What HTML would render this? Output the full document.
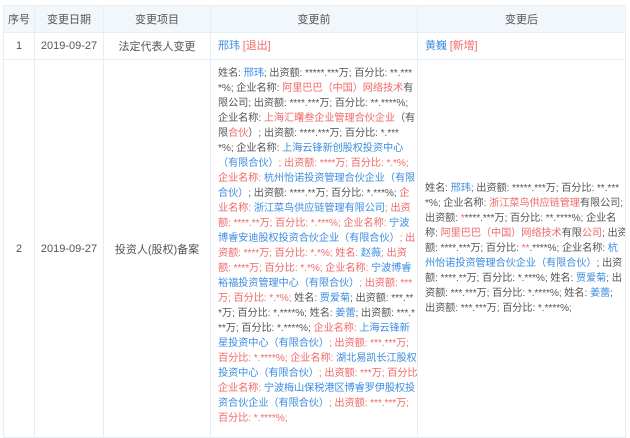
<!DOCTYPE html>
<html><head><meta charset="utf-8"><style>
body{margin:0;background:#fff;font-family:"Liberation Sans","Noto Sans CJK SC",sans-serif;font-size:11px;color:#555;}
table{position:absolute;left:3px;top:5px;border-collapse:collapse;table-layout:fixed;width:622px;}
td,th{border:1px solid #e6edf5;padding:0;overflow:hidden;}
th{background:#f2f7fc;height:26px;font-weight:normal;color:#555;font-size:11px;}
td.c{text-align:center;}
.r1 td{height:26px;}
.t{padding:0 0 0 7px;white-space:nowrap;line-height:15px;font-size:10.2px;letter-spacing:-0.1px;}
.b{color:#3d8de0}.r{color:#f06a6a}
</style></head><body>
<table>
<colgroup><col style="width:31px"><col style="width:69px"><col style="width:107px"><col style="width:207px"><col style="width:208px"></colgroup>
<tr><th>序号</th><th>变更日期</th><th>变更项目</th><th>变更前</th><th>变更后</th></tr>
<tr class="r1"><td class="c">1</td><td class="c">2019-09-27</td><td class="c">法定代表人变更</td><td class="t" style="font-size:11px"><span class="b">邢玮</span> <span class="r">[退出]</span></td><td class="t" style="font-size:11px"><span class="b">黄巍</span> <span class="r">[新增]</span></td></tr>
<tr><td class="c">2</td><td class="c">2019-09-27</td><td class="c">投资人(股权)备案</td>
<td class="t" style="height:371px;vertical-align:top;padding-top:6px">姓名: <span class="b">邢玮</span>; 出资额: *****.***万; 百分比: **.***<br>
*%; 企业名称: <span class="r">阿里巴巴（中国）网络技术</span>有<br>
限公司; 出资额: ****.***万; 百分比: **.****%;<br>
企业名称: <span class="r">上海汇曙叁企业管理合伙企业</span>（有<br>
限<span class="r">合伙</span>）; 出资额: ****.***万; 百分比: *.***<br>
*%; 企业名称: <span class="b">上海云锋新创股权投资中心</span><br>
<span class="b">（有限合伙）</span><span class="r">; 出资额: ****万; 百分比: *.*%;</span><br>
<span class="r">企业名称: </span><span class="b">杭州怡诺投资管理合伙企业（有限</span><br>
<span class="b">合伙）</span>; 出资额: ****.**万; 百分比: *.***%; <span class="r">企</span><br>
<span class="r">业名称: </span><span class="b">浙江菜鸟供应链管理有限公司</span><span class="r">; 出资</span><br>
<span class="r">额: ****.**万; 百分比: *.***%; 企业名称: </span><span class="b">宁波</span><br>
<span class="b">博睿安迪股权投资合伙企业（有限合伙）</span><span class="r">; 出</span><br>
<span class="r">资额: ****万; 百分比: *.*%; 姓名: </span><span class="b">赵薇</span><span class="r">; 出资</span><br>
<span class="r">额: ****万; 百分比: *.*%; 企业名称: </span><span class="b">宁波博睿</span><br>
<span class="b">裕福投资管理中心（有限合伙）</span><span class="r">; 出资额: ***</span><br>
<span class="r">万; 百分比: *.*%;</span> 姓名: <span class="b">贾爱菊</span>; 出资额: ***.**<br>
*万; 百分比: *.****%; 姓名: <span class="b">姜蕾</span>; 出资额: ***.*<br>
**万; 百分比: *.****%; <span class="r">企业名称: </span><span class="b">上海云锋新</span><br>
<span class="b">星投资中心（有限合伙）</span><span class="r">; 出资额: ***.***万;</span><br>
<span class="r">百分比: *.****%; 企业名称: </span><span class="b">湖北易凯长江股权</span><br>
<span class="b">投资中心（有限合伙）</span><span class="r">; 出资额: ***万; 百分比: *.*%;</span><br>
<span class="r">企业名称: </span><span class="b">宁波梅山保税港区博睿罗伊股权投</span><br>
<span class="b">资合伙企业（有限合伙）</span><span class="r">; 出资额: ***.***万;</span><br>
<span class="r">百分比: *.****%;</span></td>
<td class="t">姓名: <span class="b">邢玮</span>; 出资额: *****.***万; 百分比: **.***<br>
*%; 企业名称: <span class="r">浙江菜鸟供应链管理</span>有限公司;<br>
出资额: <span class="r">*</span>****.***万; 百分比: **.****%; 企业名<br>
称: <span class="r">阿里巴巴（中国）网络技术</span>有限<span class="r">公司</span>; 出资<br>
额: ****.***万; 百分比: <span class="r">**</span>.****%; 企业名称: <span class="b">杭</span><br>
<span class="b">州怡诺投资管理合伙企业（有限合伙）</span>; 出资<br>
额: ****.**万; 百分比: *.***%; 姓名: <span class="b">贾爱菊</span>; 出<br>
资额: ***.***万; 百分比: *.****%; 姓名: <span class="b">姜蕾</span>;<br>
出资额: ***.***万; 百分比: *.****%;</td></tr>
</table>
</body></html>
